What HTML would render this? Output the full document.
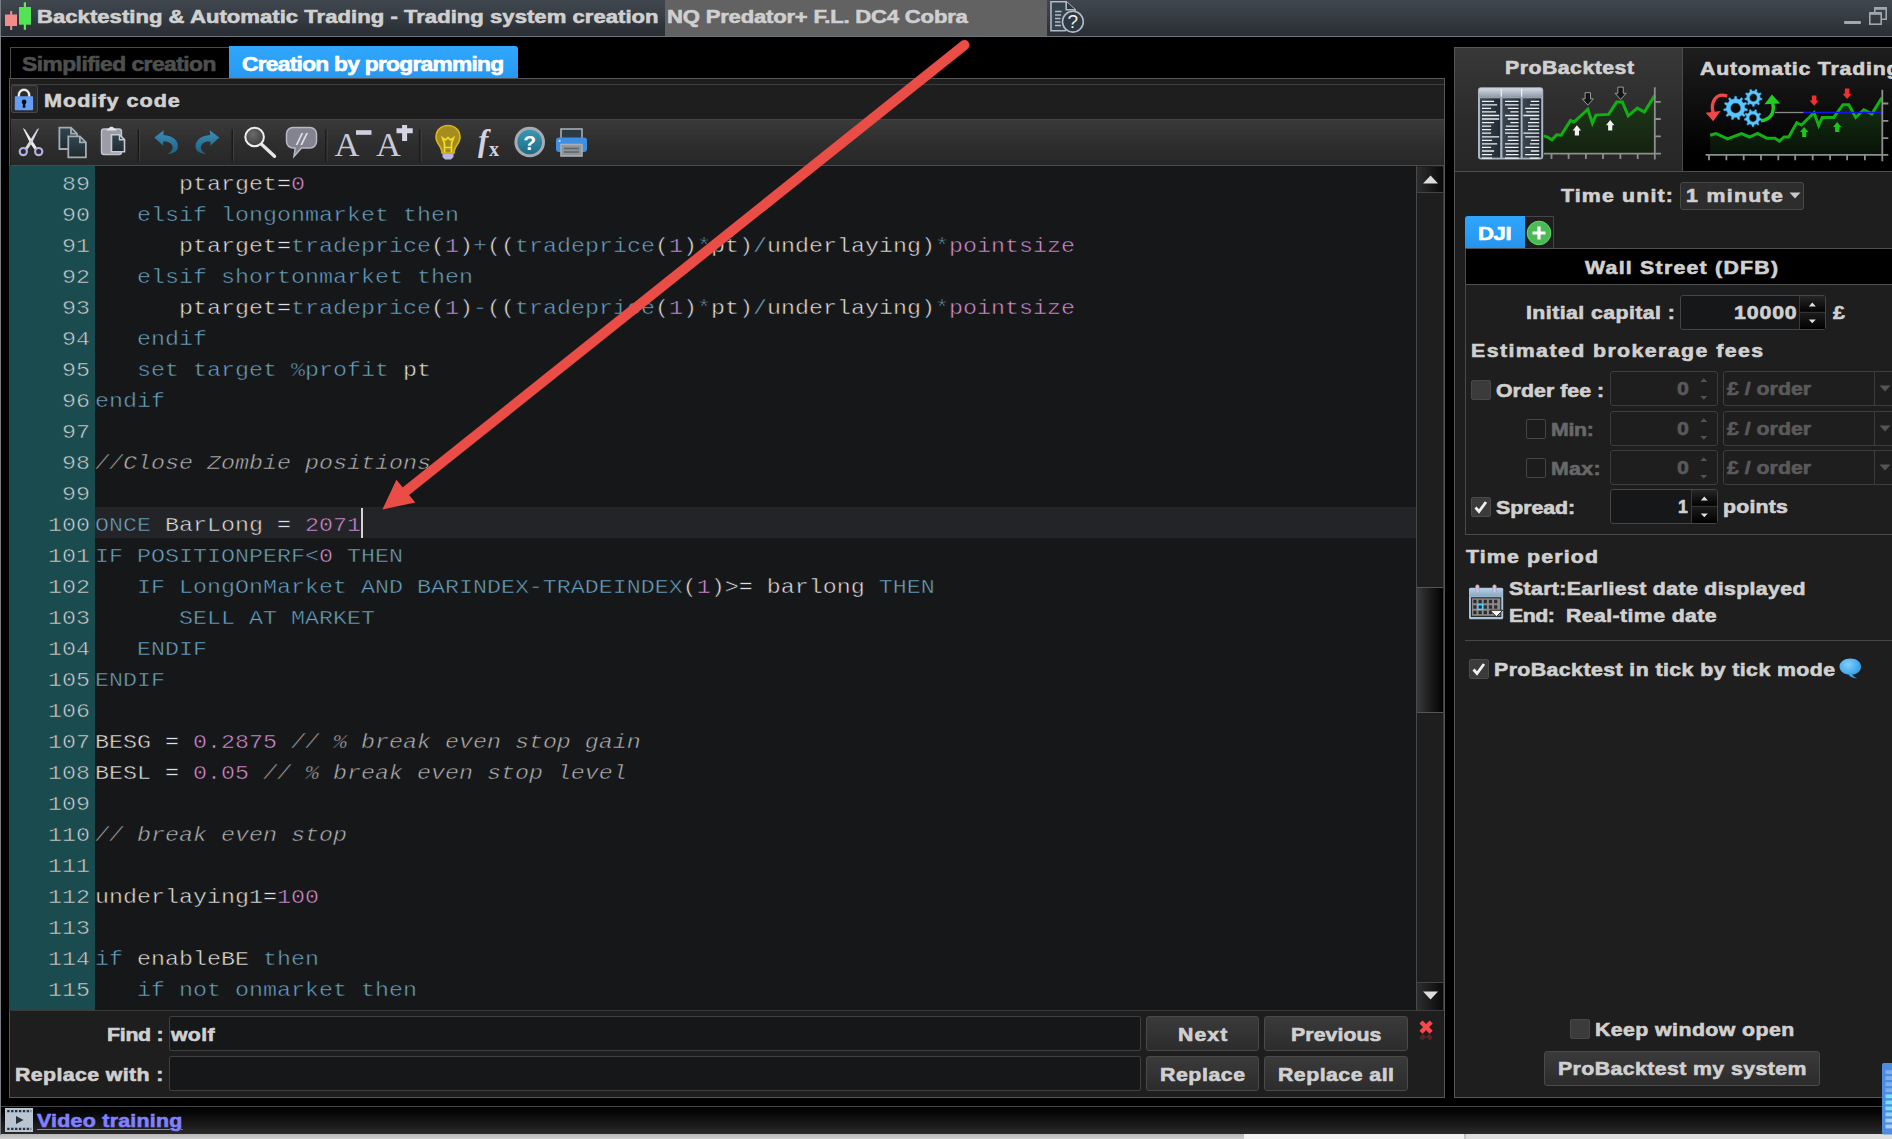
<!DOCTYPE html>
<html lang="en">
<head>
<meta charset="utf-8">
<title>Backtesting &amp; Automatic Trading - Trading system creation</title>
<style>
*{box-sizing:border-box;margin:0;padding:0}
html,body{width:1892px;height:1139px;overflow:hidden;background:#000}
body{position:relative;font-family:"Liberation Sans",sans-serif;font-weight:bold;color:#d6d6d6;font-size:20px}
.abs{position:absolute}
.t{position:absolute;white-space:pre;line-height:24px;height:24px;transform-origin:0 0;-webkit-text-stroke:0.6px currentColor}
/* title bar */
#titlebar{left:0;top:0;width:1892px;height:37px;background:linear-gradient(#41474f,#383e45 40%,#2d3238 80%,#2a2f35);border-bottom:1px solid #6d747c}
#titlehl{left:665px;top:0;width:382px;height:36px;background:#626262}
/* tabs */
#tab1{left:10px;top:47px;width:220px;height:32px;border:1px solid #4a4a4a;border-right:none;background:#000}
#tab2{left:229px;top:46px;width:289px;height:33px;background:linear-gradient(#30a6fc,#2b9ff8 60%,#2796ee);border-radius:0 3px 0 0}
/* left panel */
#lpanel{left:9px;top:78px;width:1436px;height:1020px;border:1px solid #565656;background:#1e1e1e}
#toolbar{left:11px;top:119px;width:1433px;height:47px;background:linear-gradient(#3a3a3a,#2e2e2e 50%,#272727);border-top:1px solid #444;border-bottom:1px solid #4a4a4a}
#codebg{left:11px;top:166px;width:1405px;height:844px;background:#161719}
#gutter{left:9px;top:166px;width:86px;height:844px;background:#1a4b4f}
.row{position:absolute;left:10px;width:1406px;height:31px;font-family:"Liberation Mono",monospace;font-weight:normal;font-size:20.4px;white-space:pre}
.row.hl .cd{background:#232427;-webkit-text-stroke-color:#232427}
.ln{position:absolute;left:0;top:0;width:70px;height:31px;line-height:37.500px;text-align:right;color:#d0d0d0;-webkit-text-stroke:0.5px #1a4b4f;transform:scaleX(1.1438);transform-origin:100% 0;left:10px}
.cd{position:absolute;left:85px;top:0;width:1155px;height:31px;line-height:37.500px;-webkit-text-stroke:0.5px #161719;transform:scaleX(1.1438);transform-origin:0 0}
.k{color:#68a4c6}.n{color:#d68ed6}.i{color:#e2e2e2}.c{color:#b2b2b2;font-style:italic}
/* find */
.inp{position:absolute;background:#161719;border:1px solid #3f3f3f;border-radius:2px}
.btn{position:absolute;background:linear-gradient(#3a3a3a,#2c2c2c);border:1px solid #4a4a4a;border-radius:3px;text-align:center;line-height:32px;color:#d4d4d4}
/* right panel */
#rpanel{left:1454px;top:47px;width:451px;height:1051px;border:1px solid #565656;background:#1e1e1e}

.fin{position:absolute;left:1610px;width:108px;height:35px;border:1px solid #3d3d3d;border-radius:3px;background:#1e1e1e}
.fdd{position:absolute;left:1723px;width:180px;height:35px;border:1px solid #3d3d3d;border-radius:3px;background:#1e1e1e}
.fdd:after{content:"";position:absolute;left:150px;top:0;width:1px;height:33px;background:#3d3d3d}
</style>
</head>
<body>
<!-- title bar -->
<div id="titlebar" class="abs"></div>
<div id="titlehl" class="abs"></div>

<!-- tabs -->
<div id="tab1" class="abs"></div>
<div id="tab2" class="abs"></div>

<!-- left panel -->
<div id="lpanel" class="abs"></div>
<div class="abs" style="left:11px;top:84px;width:1433px;height:1px;background:#3c3c3c"></div>
<div id="toolbar" class="abs"></div>
<div id="codebg" class="abs"></div>
<div id="gutter" class="abs"></div>
<div class="row" style="top:166px"><span class="ln">89</span><span class="cd"><span class="i">      ptarget=</span><span class="n">0</span></span></div>
<div class="row" style="top:197px"><span class="ln">90</span><span class="cd"><span class="k">   elsif longonmarket then</span></span></div>
<div class="row" style="top:228px"><span class="ln">91</span><span class="cd"><span class="i">      ptarget=</span><span class="k">tradeprice</span><span class="i">(</span><span class="n">1</span><span class="i">)</span><span class="k">+</span><span class="i">((</span><span class="k">tradeprice</span><span class="i">(</span><span class="n">1</span><span class="i">)</span><span class="k">*</span><span class="i">pt)</span><span class="k">/</span><span class="i">underlaying)</span><span class="k">*</span><span class="n">pointsize</span></span></div>
<div class="row" style="top:259px"><span class="ln">92</span><span class="cd"><span class="k">   elsif shortonmarket then</span></span></div>
<div class="row" style="top:290px"><span class="ln">93</span><span class="cd"><span class="i">      ptarget=</span><span class="k">tradeprice</span><span class="i">(</span><span class="n">1</span><span class="i">)</span><span class="k">-</span><span class="i">((</span><span class="k">tradeprice</span><span class="i">(</span><span class="n">1</span><span class="i">)</span><span class="k">*</span><span class="i">pt)</span><span class="k">/</span><span class="i">underlaying)</span><span class="k">*</span><span class="n">pointsize</span></span></div>
<div class="row" style="top:321px"><span class="ln">94</span><span class="cd"><span class="k">   endif</span></span></div>
<div class="row" style="top:352px"><span class="ln">95</span><span class="cd"><span class="k">   set target %profit</span><span class="i"> pt</span></span></div>
<div class="row" style="top:383px"><span class="ln">96</span><span class="cd"><span class="k">endif</span></span></div>
<div class="row" style="top:414px"><span class="ln">97</span><span class="cd"></span></div>
<div class="row" style="top:445px"><span class="ln">98</span><span class="cd"><span class="c">//Close Zombie positions</span></span></div>
<div class="row" style="top:476px"><span class="ln">99</span><span class="cd"></span></div>
<div class="row hl" style="top:507px"><span class="ln">100</span><span class="cd"><span class="k">ONCE</span><span class="i"> BarLong = </span><span class="n">2071</span></span></div>
<div class="row" style="top:538px"><span class="ln">101</span><span class="cd"><span class="k">IF POSITIONPERF&lt;</span><span class="n">0</span><span class="k"> THEN</span></span></div>
<div class="row" style="top:569px"><span class="ln">102</span><span class="cd"><span class="k">   IF LongOnMarket AND BARINDEX-TRADEINDEX</span><span class="i">(</span><span class="n">1</span><span class="i">)&gt;= barlong </span><span class="k">THEN</span></span></div>
<div class="row" style="top:600px"><span class="ln">103</span><span class="cd"><span class="k">      SELL AT MARKET</span></span></div>
<div class="row" style="top:631px"><span class="ln">104</span><span class="cd"><span class="k">   ENDIF</span></span></div>
<div class="row" style="top:662px"><span class="ln">105</span><span class="cd"><span class="k">ENDIF</span></span></div>
<div class="row" style="top:693px"><span class="ln">106</span><span class="cd"></span></div>
<div class="row" style="top:724px"><span class="ln">107</span><span class="cd"><span class="i">BESG = </span><span class="n">0.2875</span><span class="c"> // % break even stop gain</span></span></div>
<div class="row" style="top:755px"><span class="ln">108</span><span class="cd"><span class="i">BESL = </span><span class="n">0.05</span><span class="c"> // % break even stop level</span></span></div>
<div class="row" style="top:786px"><span class="ln">109</span><span class="cd"></span></div>
<div class="row" style="top:817px"><span class="ln">110</span><span class="cd"><span class="c">// break even stop</span></span></div>
<div class="row" style="top:848px"><span class="ln">111</span><span class="cd"></span></div>
<div class="row" style="top:879px"><span class="ln">112</span><span class="cd"><span class="i">underlaying1=</span><span class="n">100</span></span></div>
<div class="row" style="top:910px"><span class="ln">113</span><span class="cd"></span></div>
<div class="row" style="top:941px"><span class="ln">114</span><span class="cd"><span class="k">if</span><span class="i"> enableBE </span><span class="k">then</span></span></div>
<div class="row" style="top:972px"><span class="ln">115</span><span class="cd"><span class="k">   if not onmarket then</span></span></div>
<div class="abs" style="left:11px;top:1010px;width:1433px;height:1px;background:#3c3c3c"></div>

<!-- find / replace -->
<div class="inp" style="left:169px;top:1016px;width:972px;height:35px"></div>
<div class="inp" style="left:169px;top:1056px;width:972px;height:35px"></div>
<div class="btn" style="left:1146px;top:1016px;width:113px;height:35px"></div>
<div class="btn" style="left:1264px;top:1016px;width:144px;height:35px"></div>
<div class="btn" style="left:1146px;top:1056px;width:113px;height:35px"></div>
<div class="btn" style="left:1264px;top:1056px;width:144px;height:35px"></div>

<!-- bottom bar -->
<div class="abs" style="left:0;top:1098px;width:1892px;height:8px;background:#000"></div>
<div class="abs" style="left:0;top:1106px;width:1892px;height:29px;background:linear-gradient(#000,#0a0a0a 30%,#2c2c2c);border-top:1px solid #474747"></div>
<div class="abs" style="left:0;top:1134px;width:1892px;height:5px;background:linear-gradient(#b8b8b8,#cfcfcf)"></div>
<div class="abs" style="left:1244px;top:1134px;width:220px;height:5px;background:#f2f2f2"></div>
<div class="abs" style="left:1466px;top:1134px;width:426px;height:5px;background:#dedede"></div>
<!-- right panel -->
<div id="rpanel" class="abs"></div>


<!-- right panel shapes -->
<div class="abs" style="left:1455px;top:48px;width:228px;height:124px;background:linear-gradient(#383838,#2b2b2b 60%,#262626);border-right:1px solid #4a4a4a"></div>
<div class="abs" style="left:1683px;top:48px;width:209px;height:124px;background:linear-gradient(#1e1e1e,#0d0d0d 50%,#000 85%)"></div>
<div class="abs" style="left:1455px;top:171px;width:437px;height:1px;background:#4e4e4e"></div>
<!-- time unit dropdown -->
<div class="abs" style="left:1680px;top:182px;width:124px;height:28px;background:#2d2d2d;border:1px solid #484848;border-radius:3px"></div>
<svg class="abs" style="left:1789px;top:192px" width="12" height="7"><path d="M0.5 0.5h11l-5.5 6z" fill="#c8c8c8"/></svg>
<!-- DJI tab -->
<div class="abs" style="left:1465px;top:216px;width:60px;height:33px;background:linear-gradient(#2fa5fc,#2a9cf6 60%,#2493ec);border-radius:3px 0 0 0"></div>
<div class="abs" style="left:1525px;top:216px;width:29px;height:33px;border:1px solid #454545;border-left:none;background:#1e1e1e"></div>
<svg class="abs" style="left:1526px;top:220px" width="26" height="26"><circle cx="13" cy="13" r="11.800" fill="#4cba54" stroke="#62dc6a" stroke-width="1"/><path d="M13 6.5v13M6.5 13h13" stroke="#fff" stroke-width="3.2"/></svg>
<!-- wall street bar -->
<div class="abs" style="left:1465px;top:248px;width:427px;height:37px;background:#000;border:1px solid #505050;border-right:none"></div>
<!-- group box -->
<div class="abs" style="left:1465px;top:284px;width:440px;height:251px;border:1px solid #4a4a4a;border-top:none"></div>
<!-- initial capital input -->
<div class="abs" style="left:1680px;top:295px;width:146px;height:35px;background:#161719;border:1px solid #454545;border-radius:3px"></div>
<div class="abs" style="left:1799px;top:296px;width:26px;height:33px;background:linear-gradient(#262626,#050505 45%,#1c1c1c 52%,#000);border-left:1px solid #3a3a3a"></div>
<div class="abs" style="left:1799px;top:312px;width:26px;height:1px;background:#333"></div>
<svg class="abs" style="left:1807.500px;top:301.500px" width="9" height="5"><path d="M0.800 4.400l3.500-3.800 3.500 3.800z" fill="#e0e0e0"/></svg>
<svg class="abs" style="left:1807.500px;top:319px" width="9" height="5"><path d="M0.800 0.500l3.500 3.800 3.500-3.800z" fill="#e0e0e0"/></svg>
<!-- order fee rows -->
<div class="abs" style="left:1471px;top:380px;width:20px;height:20px;background:#3b3b3b;border:1px solid #484848;border-radius:2px"></div>
<div class="abs" style="left:1526px;top:419px;width:20px;height:20px;background:#1c1c1c;border:1px solid #454545;border-radius:2px"></div>
<div class="abs" style="left:1526px;top:458px;width:20px;height:20px;background:#1c1c1c;border:1px solid #454545;border-radius:2px"></div>
<div class="fin" style="top:371px"></div><div class="fdd" style="top:371px"></div>
<div class="fin" style="top:411px"></div><div class="fdd" style="top:411px"></div>
<div class="fin" style="top:450px"></div><div class="fdd" style="top:450px"></div>
<svg class="abs" style="left:1700px;top:378px" width="8" height="22"><path d="M0.300 4l3.500-3.700 3.500 3.700zM0.300 18l3.500 3.700 3.500-3.700z" fill="#525252"/></svg>
<svg class="abs" style="left:1700px;top:418px" width="8" height="22"><path d="M0.300 4l3.500-3.700 3.500 3.700zM0.300 18l3.500 3.700 3.500-3.700z" fill="#525252"/></svg>
<svg class="abs" style="left:1700px;top:457px" width="8" height="22"><path d="M0.300 4l3.500-3.700 3.500 3.700zM0.300 18l3.500 3.700 3.500-3.700z" fill="#525252"/></svg>
<svg class="abs" style="left:1879px;top:385px" width="12" height="7"><path d="M0.5 0.5h11l-5.5 6z" fill="#555"/></svg>
<svg class="abs" style="left:1879px;top:425px" width="12" height="7"><path d="M0.5 0.5h11l-5.5 6z" fill="#555"/></svg>
<svg class="abs" style="left:1879px;top:464px" width="12" height="7"><path d="M0.5 0.5h11l-5.5 6z" fill="#555"/></svg>
<!-- spread -->
<div class="abs" style="left:1471px;top:497px;width:20px;height:20px;background:#3b3b3b;border:1px solid #4a4a4a;border-radius:2px"></div>
<svg class="abs" style="left:1473px;top:499px" width="16" height="16"><path d="M2.5 8.5l3.5 4 7-9.5" stroke="#f0f0f0" stroke-width="2.8" fill="none"/></svg>
<div class="abs" style="left:1610px;top:489px;width:108px;height:35px;background:#161719;border:1px solid #454545;border-radius:3px"></div>
<div class="abs" style="left:1691px;top:490px;width:26px;height:33px;background:linear-gradient(#262626,#050505 45%,#1c1c1c 52%,#000);border-left:1px solid #3a3a3a"></div>
<div class="abs" style="left:1691px;top:506px;width:26px;height:1px;background:#333"></div>
<svg class="abs" style="left:1699.500px;top:495.500px" width="9" height="5"><path d="M0.800 4.400l3.500-3.800 3.500 3.800z" fill="#e0e0e0"/></svg>
<svg class="abs" style="left:1699.500px;top:513px" width="9" height="5"><path d="M0.800 0.500l3.500 3.800 3.500-3.800z" fill="#e0e0e0"/></svg>
<!-- time period -->
<div class="abs" style="left:1465px;top:640px;width:427px;height:1px;background:#474747"></div>
<!-- tick checkbox -->
<div class="abs" style="left:1469px;top:659px;width:20px;height:20px;background:#3b3b3b;border:1px solid #4a4a4a;border-radius:2px"></div>
<svg class="abs" style="left:1471px;top:661px" width="16" height="16"><path d="M2.5 8.5l3.5 4 7-9.5" stroke="#f0f0f0" stroke-width="2.8" fill="none"/></svg>
<!-- keep window open -->
<div class="abs" style="left:1570px;top:1019px;width:20px;height:20px;background:#3b3b3b;border:1px solid #484848;border-radius:2px"></div>
<div class="btn" style="left:1544px;top:1051px;width:276px;height:35px"></div>

<!-- window frame -->
<div class="abs" style="left:0;top:0;width:1px;height:1135px;background:#777c82"></div>
<!-- title icon: candlesticks -->
<svg class="abs" style="left:0;top:0" width="36" height="36">
<rect x="10.2" y="11" width="2" height="19" fill="#f08a8a"/><rect x="5" y="14.5" width="12" height="11.5" fill="#f38b8b"/>
<rect x="23.8" y="2.3" width="2.2" height="27.5" fill="#5ee85e"/><rect x="19" y="7" width="12" height="17.7" fill="#54e354"/>
</svg>
<!-- help doc icon -->
<svg class="abs" style="left:1048px;top:0" width="40" height="36" fill="none" stroke="#b2bac2" stroke-width="1.600">
<path d="M3 1.800h15.200l9 8v9.200l-10 11.700H3z" fill="#35434f"/><path d="M18.200 1.800v8h9" fill="#2b353e"/>
<path d="M7 11.500h6.500M7 15h6M7 18.500h5.500M7 22h5.500M7 25.500h6" stroke-width="1.500"/>
<circle cx="24.900" cy="21.700" r="10.400" fill="#2e3942"/>
<text x="24.900" y="28.300" font-family="Liberation Sans,sans-serif" font-size="19" font-weight="normal" text-anchor="middle" fill="#f0f2f4" stroke="none">?</text>
</svg>
<!-- window controls -->
<div class="abs" style="left:1844px;top:21px;width:17px;height:3px;background:#a0a7af;border-radius:1px"></div>
<svg class="abs" style="left:1866px;top:5px" width="24" height="22" fill="none" stroke="#a0a7af" stroke-width="1.600"><path d="M8.800 7V2.800h11.400v11.400h-4.500"/><path d="M8.800 3.600h11.400" stroke-width="2.400"/><rect x="3.800" y="7.800" width="11.400" height="11.400"/><path d="M3.800 8.600h11.400" stroke-width="2.400"/></svg>
<!-- lock icon -->
<div class="abs" style="left:11px;top:85px;width:27px;height:28px;background:#2b2b2b;border:1px solid #474747;border-radius:2px"></div>
<svg class="abs" style="left:11px;top:85px" width="27" height="28">
<path d="M7.800 12.500V10a5.200 5.200 0 0 1 10.400 0V12.500" fill="none" stroke="#8a8a8a" stroke-width="3.400" opacity=".55"/>
<path d="M7.800 12.500V10a5.200 5.200 0 0 1 10.400 0V12.500" fill="none" stroke="#f4f4f4" stroke-width="1.900"/>
<rect x="3.800" y="11.200" width="18.300" height="14" rx=".8" fill="#659cf4"/>
<circle cx="13.100" cy="17" r="2.400" fill="#0a0d16"/><path d="M12.100 17.500h2l.4 5.300h-2.800z" fill="#0a0d16"/>
</svg>
<!-- toolbar icons -->
<svg class="abs" style="left:11px;top:120px" width="600" height="46">
<defs>
<linearGradient id="gdoc" x1="0" y1="0" x2="0" y2="1"><stop offset="0" stop-color="#33454f"/><stop offset="1" stop-color="#1f2a31"/></linearGradient>
<linearGradient id="gblue" x1="0" y1="0" x2="0" y2="1"><stop offset="0" stop-color="#3a90b8"/><stop offset="1" stop-color="#1f5f82"/></linearGradient>
<radialGradient id="gmag" cx="0.4" cy="0.35" r="0.7"><stop offset="0" stop-color="#6a6a6a"/><stop offset="1" stop-color="#3a3a3a"/></radialGradient>
<linearGradient id="ghelp" x1="0" y1="0" x2="0" y2="1"><stop offset="0" stop-color="#3a9ab4"/><stop offset="1" stop-color="#1c6a86"/></linearGradient>
</defs>
<!-- scissors (origin offset: x-11, y-120) -->
<g>
<path d="M11.800 8 L14 9.500 L26.500 28.800 L23.500 29.500 L19 23 z" fill="#ececf2"/>
<path d="M28.200 8 L26 9.500 L13.500 28.800 L16.500 29.500 L21 23 z" fill="#d6d6de"/>
<circle cx="12.3" cy="31.6" r="3.6" fill="none" stroke="#b4b0e2" stroke-width="2.2"/>
<circle cx="27.7" cy="31.6" r="3.6" fill="none" stroke="#b4b0e2" stroke-width="2.2"/>
</g>
<!-- copy -->
<g stroke="#a4adb4" stroke-width="1.8" fill="url(#gdoc)">
<path d="M48.4 7.6h11.6l6 6v15.4h-17.6z"/><path d="M60 7.6v6h6" fill="none"/>
<path d="M57.3 16.4h11.6l6 6v15h-17.6z"/><path d="M68.9 16.4v6h6" fill="none"/>
</g>
<!-- paste -->
<g>
<rect x="90.5" y="9" width="20" height="25.5" rx="2.5" fill="#9c9ca6" stroke="#c4c4cc" stroke-width="1.4"/>
<path d="M95.5 10.5c0-2 2-2 2.5-2 .3-2.2 4.700-2.2 5 0 .5 0 2.500 0 2.500 2z" fill="#e4e4ea"/>
<path d="M100.500 14.700h8l5 5v12h-13z" fill="url(#gdoc)" stroke="#c8ccd2" stroke-width="1.6"/><path d="M108.500 14.700v5h5" fill="none" stroke="#c8ccd2" stroke-width="1.4"/>
</g>
<path d="M127.500 9.500v32" stroke="#161616" stroke-width="1.4"/><path d="M128.600 9.500v32" stroke="#484848" stroke-width="0.8"/>
<!-- undo -->
<path d="M143.300 17.500 L152.800 10.300 L152.300 15 C162 15.500 168 21 166.800 28 C166 31.500 161.500 34 156.500 34 C161.500 31.500 163.200 27 160 23.800 C158 21.800 155.500 21.300 152 21.500 L152.300 25.800z" fill="url(#gblue)"/>
<!-- redo -->
<path d="M208.200 17.500 L198.700 10.300 L199.200 15 C189.500 15.500 183.500 21 184.700 28 C185.500 31.500 190 34 195 34 C190 31.500 188.300 27 191.500 23.800 C193.500 21.800 196 21.300 199.500 21.500 L199.200 25.800z" fill="url(#gblue)"/>
<path d="M221.300 9.500v32" stroke="#161616" stroke-width="1.4"/><path d="M222.400 9.500v32" stroke="#484848" stroke-width="0.8"/>
<!-- magnifier -->
<path d="M250 23.800 L263.500 36.300" stroke="#e6e6e6" stroke-width="3.4" stroke-linecap="round"/>
<circle cx="243.600" cy="17" r="9.300" fill="url(#gmag)" stroke="#f0f0f0" stroke-width="2"/>
<!-- comment bubble -->
<path d="M282 7.500h17a6.500 6.500 0 0 1 6.500 6.500v7.500a6.500 6.500 0 0 1 -6.500 6.500h-8.500l-7.500 8.500 1.200-8.500h-2.200a6.500 6.500 0 0 1 -6.500 -6.500v-7.500a6.500 6.500 0 0 1 6.500 -6.500z" fill="#83838f" stroke="#b8b8c6" stroke-width="1.5"/>
<text x="290.500" y="24.500" font-family="Liberation Sans,sans-serif" font-style="italic" font-weight="normal" font-size="17" text-anchor="middle" fill="#f4f4f8">//</text>
<path d="M315 9.500v32" stroke="#161616" stroke-width="1.4"/><path d="M316.100 9.500v32" stroke="#484848" stroke-width="0.8"/>
<!-- A- A+ -->
<text x="323.500" y="36" font-family="Liberation Serif,serif" font-weight="normal" font-size="34.5" fill="#c9c9d8">A</text>
<rect x="345" y="10.200" width="15.500" height="4.600" fill="#d0d0e0"/>
<text x="365" y="36" font-family="Liberation Serif,serif" font-weight="normal" font-size="34.5" fill="#c9c9d8">A</text>
<path d="M385.500 10.700h16.200M393.600 5v16" stroke="#d4d4e4" stroke-width="5"/>
<path d="M409 9.500v32" stroke="#161616" stroke-width="1.4"/><path d="M410.100 9.500v32" stroke="#484848" stroke-width="0.8"/>
<!-- bulb -->
<path d="M437 5.500c-7 0-12 5-12 11.500 0 4.500 2.500 7 4.500 10.500 1 1.800 1.500 3.500 1.500 5.500h12c0-2 .5-3.700 1.500-5.500 2-3.500 4.500-6 4.500-10.500 0-6.500-5-11.500-12-11.500z" fill="#a48c1e" stroke="#d8b61c" stroke-width="1.600"/>
<path d="M433.500 32.500v-9l-2-5.500 3 2 2.500-2.500 2.500 2.500 3-2-2 5.500v9" fill="none" stroke="#f4dc2a" stroke-width="1.700"/>
<path d="M433.800 27.500h6.400" stroke="#f4dc2a" stroke-width="1.500"/>
<path d="M431.500 33.500h11v3.500l-2.500 2.500h-6l-2.500-2.500z" fill="#b9b5e0"/>
<!-- fx -->
<text x="467" y="30.500" font-family="Liberation Serif,serif" font-style="italic" font-weight="bold" font-size="31" fill="#d2d2e0">f</text>
<text x="478" y="35.500" font-family="Liberation Serif,serif" font-weight="bold" font-size="20" fill="#d2d2e0">x</text>
<!-- help -->
<circle cx="518.700" cy="22" r="13.800" fill="url(#ghelp)" stroke="#a9a9b3" stroke-width="3"/>
<text x="518.700" y="29.500" font-family="Liberation Sans,sans-serif" font-weight="bold" font-size="21" text-anchor="middle" fill="#fff">?</text>
<!-- printer -->
<rect x="550" y="9" width="21" height="11" fill="#2c3b45" stroke="#a8aeb4" stroke-width="1.600"/>
<rect x="545" y="17.500" width="31" height="14.500" rx="3" fill="#3d8fe4"/>
<circle cx="548.600" cy="21" r="1.100" fill="#cfe4ff"/>
<rect x="550" y="24.500" width="21" height="11.500" fill="#8e9499" stroke="#a8aeb4" stroke-width="1.600"/>
<path d="M553 28.500h15M553 32h15" stroke="#5e6468" stroke-width="1.500"/>
</svg>

<!-- scrollbar -->
<div class="abs" style="left:1416px;top:166px;width:28px;height:844px;background:#1e1e1e;border-left:1px solid #4a4a4a;border-right:1px solid #3c3c3c"></div>
<div class="abs" style="left:1417px;top:167px;width:26px;height:26px;background:linear-gradient(90deg,#2e2e2e,#0a0a0a);border-bottom:1px solid #444"></div>
<svg class="abs" style="left:1423px;top:175px" width="15" height="9"><path d="M0 8.500l7.500-8 7.500 8z" fill="#dcdcdc"/></svg>
<div class="abs" style="left:1417px;top:587px;width:26px;height:126px;background:linear-gradient(90deg,#3a3a3a,#1c1c1c 50%,#020202);border-top:1px solid #555;border-bottom:1px solid #555"></div>
<div class="abs" style="left:1417px;top:982px;width:26px;height:28px;background:linear-gradient(90deg,#2e2e2e,#0a0a0a);border-top:1px solid #444"></div>
<svg class="abs" style="left:1423px;top:991px" width="15" height="9"><path d="M0 0.500l7.500 8 7.500-8z" fill="#dcdcdc"/></svg>
<!-- red close x -->
<svg class="abs" style="left:1418px;top:1019px" width="17" height="22"><path d="M3 3l10.200 10.200M13.200 3l-10.200 10.200" stroke="#f8464a" stroke-width="4.400"/><path d="M3 20l3.600-3.600M13.200 20l-3.600-3.600" stroke="#e83a40" stroke-width="4.400" opacity=".28"/></svg>
<!-- big red arrow -->
<svg class="abs" style="left:0;top:0;pointer-events:none" width="1000" height="560"><path d="M964.500 45 L406.300 490.900" stroke="#ea4d45" stroke-width="10" stroke-linecap="round"/><path d="M382.400 509.600 L396.400 479.700 L415.300 502.500z" fill="#ea4d45"/></svg>
<!-- caret -->
<div class="abs" style="left:361px;top:508px;width:2px;height:30px;background:#d4d4d4"></div>
<!-- video icon -->
<svg class="abs" style="left:5px;top:1108px" width="28" height="24"><rect x="0" y="0" width="28" height="24" fill="#b9c5d1"/><path d="M11 8l7.500 4-7.500 4z" fill="#22303a"/><path d="M2.200 3.200h24M2.200 20.800h24" stroke="#25343e" stroke-width="2.200" stroke-dasharray="2.400 1.500"/></svg>
<!-- calendar icon -->
<svg class="abs" style="left:1467px;top:584px" width="38" height="37">
<defs><linearGradient id="gcal" x1="0" y1="0" x2="0" y2="1"><stop offset="0" stop-color="#b4d2ea"/><stop offset="1" stop-color="#86a6c2"/></linearGradient></defs>
<rect x="2" y="3.800" width="34.200" height="31.400" rx="1.500" fill="#a9c4da"/>
<rect x="2.600" y="4.400" width="33" height="8.200" fill="url(#gcal)"/>
<rect x="8.700" y="0.700" width="3.400" height="8.600" rx="1.600" fill="#d2c3dc" stroke="#9f94b4" stroke-width=".6"/><rect x="25.800" y="0.700" width="3.400" height="8.600" rx="1.600" fill="#d2c3dc" stroke="#9f94b4" stroke-width=".6"/>
<rect x="3.900" y="13.200" width="30.400" height="19.800" fill="#2c2c2c"/>
<rect x="5" y="14.400" width="28.200" height="17.400" fill="#8a8a8a"/>
<rect x="6.3" y="15.8" width="3.200" height="3.400" fill="#2b2b2d"/><rect x="11.5" y="15.8" width="3.200" height="3.400" fill="#2b2b2d"/><rect x="16.7" y="15.8" width="3.200" height="3.400" fill="#2b2b2d"/><rect x="21.9" y="15.8" width="3.200" height="3.400" fill="#2b2b2d"/><rect x="27.1" y="15.8" width="3.200" height="3.400" fill="#2b2b2d"/><rect x="6.3" y="21.3" width="3.200" height="3.400" fill="#2b2b2d"/><rect x="11.5" y="21.3" width="3.200" height="3.400" fill="#2b2b2d"/><rect x="16.7" y="21.3" width="3.200" height="3.400" fill="#2b2b2d"/><rect x="21.9" y="21.3" width="3.200" height="3.400" fill="#2b2b2d"/><rect x="27.1" y="21.3" width="3.200" height="3.400" fill="#2b2b2d"/><rect x="6.3" y="26.8" width="3.200" height="3.400" fill="#2b2b2d"/><rect x="11.5" y="26.8" width="3.200" height="3.400" fill="#2b2b2d"/><rect x="16.7" y="26.8" width="3.200" height="3.400" fill="#2b2b2d"/><rect x="21.9" y="26.8" width="3.200" height="3.400" fill="#2b2b2d"/><rect x="27.1" y="26.8" width="3.200" height="3.400" fill="#2b2b2d"/>
<rect x="10.900" y="20.700" width="4.600" height="4.600" fill="#2b2b2d" stroke="#5cd0ff" stroke-width="1.400"/>
<path d="M23 26.300h12.800l-6.400 6.400z" fill="#f4f4f4" stroke="#2a2a2a" stroke-width="1"/>
</svg>
<!-- chat bubble -->
<svg class="abs" style="left:1838px;top:657px" width="26" height="24"><defs><radialGradient id="gbub" cx="0.4" cy="0.3" r="0.8"><stop offset="0" stop-color="#7fd0ff"/><stop offset="1" stop-color="#1f8fe0"/></radialGradient></defs><path d="M12.500 1.500c6 0 10.500 3.300 10.500 8s-3.500 7.500-8.500 8c1 2 2.500 3 4.500 3.700-3.500.3-6.500-.8-8.500-3.700-5-.5-9-3.500-9-8s5-8 11-8z" fill="url(#gbub)"/></svg>
<!-- bottom right blue widget -->
<svg class="abs" style="left:1881px;top:1062px" width="11" height="73"><rect x="1" y="1" width="12" height="71.500" rx="2" fill="#4c8de0"/><rect x="4.500" y="8.2" width="8" height="3.800" fill="#7eaef0"/><rect x="4.500" y="14.2" width="8" height="3.800" fill="#7eaef0"/><rect x="4.500" y="20.3" width="8" height="3.800" fill="#7eaef0"/><rect x="4.500" y="26.3" width="8" height="3.800" fill="#7eaef0"/><rect x="4.500" y="32.4" width="8" height="3.800" fill="#78def6"/><rect x="4.500" y="38.5" width="8" height="3.800" fill="#78def6"/><rect x="4.500" y="44.5" width="8" height="3.800" fill="#78def6"/><rect x="4.500" y="50.5" width="8" height="3.800" fill="#8fd0f6"/><rect x="4.500" y="56.6" width="8" height="3.800" fill="#a6d2f8"/><rect x="4.500" y="62.6" width="8" height="3.800" fill="#a8c8f6"/></svg>
<svg class="abs" style="left:0;top:0" width="1892" height="175" viewBox="0 0 1892 175">
<defs><linearGradient id="ghead" x1="0" y1="0" x2="0" y2="1"><stop offset="0" stop-color="#d4dae2"/><stop offset="1" stop-color="#8b96a4"/></linearGradient><linearGradient id="gcol" x1="0" y1="0" x2="1" y2="0"><stop offset="0" stop-color="#3a4652"/><stop offset="1" stop-color="#222a33"/></linearGradient><linearGradient id="garea" x1="0" y1="0" x2="0" y2="1"><stop offset="0" stop-color="#1f3a1c"/><stop offset="1" stop-color="#14220f"/></linearGradient><linearGradient id="garea2" x1="0" y1="0" x2="0" y2="1"><stop offset="0" stop-color="#163416"/><stop offset="1" stop-color="#081207"/></linearGradient></defs>
<rect x="1478.0" y="87.3" width="65.2" height="72.3" rx="3" fill="#a9b4c0"/>
<rect x="1479.0" y="88.3" width="63.2" height="9.5" rx="2" fill="url(#ghead)"/>
<rect x="1480.0" y="98.3" width="20.2" height="59.3" fill="url(#gcol)"/>
<path d="M1482.0 101.3h12.1M1482.0 104.8h15.2M1482.0 108.4h9.1M1482.0 111.9h14.1M1482.0 115.5h17.2M1482.0 119.0h17.2M1482.0 122.6h12.1M1482.0 126.1h9.1M1482.0 129.7h9.1M1482.0 133.2h9.1M1482.0 136.8h17.2M1482.0 140.3h10.1M1482.0 143.9h15.2M1482.0 147.4h9.1M1482.0 151.0h12.1M1482.0 154.6h10.1M1482.0 158.1h10.1" stroke="#eef0f2" stroke-width="1.3"/>
<rect x="1502.4" y="98.3" width="18.2" height="59.3" fill="url(#gcol)"/>
<path d="M1505.0 101.3h13.6M1505.0 104.8h13.6M1507.7 108.4h10.9M1510.4 111.9h8.2M1505.0 115.5h13.6M1507.7 119.0h10.9M1510.4 122.6h8.2M1505.9 126.1h12.7M1505.0 129.7h13.6M1505.0 133.2h13.6M1507.7 136.8h10.9M1507.7 140.3h10.9M1505.0 143.9h13.6M1505.0 147.4h13.6M1505.9 151.0h12.7M1505.9 154.6h12.7M1505.0 158.1h13.6" stroke="#eef0f2" stroke-width="1.3"/>
<rect x="1522.6" y="98.3" width="18.6" height="59.3" fill="url(#gcol)"/>
<path d="M1530.8 101.3h8.4M1529.9 104.8h9.3M1525.2 108.4h14.0M1526.2 111.9h13.0M1523.4 115.5h15.8M1529.9 119.0h9.3M1528.0 122.6h11.2M1528.0 126.1h11.2M1528.0 129.7h11.2M1523.4 133.2h15.8M1525.2 136.8h14.0M1530.8 140.3h8.4M1529.9 143.9h9.3M1525.2 147.4h14.0M1530.8 151.0h8.4M1525.2 154.6h14.0M1529.9 158.1h9.3" stroke="#eef0f2" stroke-width="1.3"/>
<path d="M1501.300 88.8v8M1521.600 88.8v8" stroke="#eef2f6" stroke-width="1.200"/>
<polygon points="1543.9,135.8 1547.4,137.0 1552.0,139.8 1556.6,134.7 1561.2,135.2 1570.5,120.4 1573.9,122.0 1587.8,109.3 1592.4,123.1 1595.9,115.1 1608.6,114.4 1616.7,101.9 1622.4,101.9 1628.2,115.8 1637.4,108.1 1644.4,112.1 1654.8,95.4 1654.8,153.6 1543.9,153.6" fill="url(#garea)"/>
<polyline points="1543.9,135.8 1547.4,137.0 1552.0,139.8 1556.6,134.7 1561.2,135.2 1570.5,120.4 1573.9,122.0 1587.8,109.3 1592.4,123.1 1595.9,115.1 1608.6,114.4 1616.7,101.9 1622.4,101.9 1628.2,115.8 1637.4,108.1 1644.4,112.1 1654.8,95.4" fill="none" stroke="#12b012" stroke-width="3" stroke-linejoin="miter"/>
<path d="M1654.8 87.3V159.6M1543.9 153.6H1661.0M1654.8 101.9h6M1654.8 119.0h6M1654.8 136.3h6M1551.5 153.6v5.5M1568.6 153.6v5.5M1585.9 153.6v5.5M1603.0 153.6v5.5M1620.4 153.6v5.5M1637.7 153.6v5.5" stroke="#8e8e8e" stroke-width="1.800" fill="none"/>
<path d="M1585.0 92.7 h5.5 v6.2 h2.8 l-5.5 6.2 l-5.5 -6.2 h2.8 z" fill="#141414" stroke="#9a9a9a" stroke-width="1"/>
<path d="M1617.8 87.1 h5.5 v6.2 h2.8 l-5.5 6.2 l-5.5 -6.2 h2.8 z" fill="#141414" stroke="#9a9a9a" stroke-width="1"/>
<path d="M1574.8 135.6 h4.2 v-5.2 h2.1 l-4.2 -5.2 l-4.2 5.2 h2.1 z" fill="#f0f0f0"/>
<path d="M1608.1 130.5 h4.2 v-5.2 h2.1 l-4.2 -5.2 l-4.2 5.2 h2.1 z" fill="#f0f0f0"/>
<polygon points="1710.2,135.2 1716.0,133.5 1727.5,138.8 1741.4,133.5 1749.5,137.0 1757.5,133.5 1766.8,138.2 1774.9,138.2 1779.5,141.2 1784.1,137.0 1788.7,137.0 1796.8,122.7 1801.4,125.0 1814.1,112.7 1818.7,125.5 1822.2,117.4 1833.8,117.4 1843.0,104.7 1848.8,104.7 1855.7,117.4 1863.8,109.7 1871.9,113.9 1881.8,97.7 1881.8,154.8 1710.2,154.8" fill="url(#garea2)"/>
<path d="M1774.9 112.5H1803.7" stroke="#8a8a8a" stroke-width="1.300"/>
<polyline points="1710.2,135.2 1716.0,133.5 1727.5,138.8 1741.4,133.5 1749.5,137.0 1757.5,133.5 1766.8,138.2 1774.9,138.2 1779.5,141.2 1784.1,137.0 1788.7,137.0 1796.8,122.7 1801.4,125.0 1814.1,112.7 1818.7,125.5 1822.2,117.4 1833.8,117.4 1843.0,104.7 1848.8,104.7 1855.7,117.4 1863.8,109.7 1871.9,113.9 1881.8,97.7" fill="none" stroke="#12b012" stroke-width="3"/>
<path d="M1803.7 112.5H1881.1" stroke="#1414ee" stroke-width="1.500"/>
<path d="M1882.3 89.7V161.2M1705.6 154.8H1888.3M1882.3 103.5h6M1882.3 120.8h6M1882.3 138.2h6M1709.0 154.8v5.5M1726.4 154.8v5.5M1743.7 154.8v5.5M1761.0 154.8v5.5M1778.3 154.8v5.5M1795.2 154.8v5.5M1812.7 154.8v5.5M1830.1 154.8v5.5M1847.1 154.8v5.5M1864.9 154.8v5.5" stroke="#8e8e8e" stroke-width="1.800" fill="none"/>
<path d="M1811.9 95.4 h4.5 v5.2 h2.2 l-4.5 5.2 l-4.5 -5.2 h2.2 z" fill="#f03030"/>
<path d="M1844.9 88.5 h4.5 v5.2 h2.2 l-4.5 5.2 l-4.5 -5.2 h2.2 z" fill="#f03030"/>
<path d="M1802.1 137.0 h4.2 v-5.0 h2.1 l-4.2 -5.0 l-4.2 5.0 h2.1 z" fill="#18c818"/>
<path d="M1835.1 131.9 h4.2 v-5.0 h2.1 l-4.2 -5.0 l-4.2 5.0 h2.1 z" fill="#18c818"/>
<path d="M1744.96,108.13 L1747.57,108.95 L1747.32,110.71 L1744.58,110.77 L1743.47,113.19 L1745.23,115.29 L1744.06,116.64 L1741.73,115.20 L1739.49,116.64 L1739.83,119.36 L1738.12,119.86 L1736.93,117.39 L1734.27,117.39 L1733.08,119.86 L1731.37,119.36 L1731.71,116.64 L1729.47,115.20 L1727.14,116.64 L1725.97,115.29 L1727.73,113.19 L1726.62,110.77 L1723.88,110.71 L1723.63,108.95 L1726.24,108.13 L1726.62,105.49 L1724.35,103.97 L1725.08,102.35 L1727.73,103.07 L1729.47,101.06 L1728.38,98.54 L1729.88,97.58 L1731.71,99.62 L1734.27,98.86 L1734.71,96.16 L1736.49,96.16 L1736.93,98.86 L1739.49,99.62 L1741.32,97.58 L1742.82,98.54 L1741.73,101.06 L1743.47,103.07 L1746.12,102.35 L1746.86,103.97 L1744.58,105.49z M1730.56,108.13 a5.04,5.04 0 1,0 10.08,0 a5.04,5.04 0 1,0 -10.08,0z" fill="#5cc6ff" fill-rule="evenodd" stroke="#2f8fd0" stroke-width=".5"/>
<path d="M1760.25,97.74 L1762.15,98.47 L1761.88,100.04 L1759.83,100.08 L1758.64,102.15 L1759.63,103.94 L1758.41,104.96 L1756.82,103.68 L1754.58,104.50 L1754.18,106.50 L1752.59,106.50 L1752.19,104.50 L1749.95,103.68 L1748.36,104.96 L1747.14,103.94 L1748.13,102.15 L1746.93,100.08 L1744.89,100.04 L1744.61,98.47 L1746.52,97.74 L1746.93,95.39 L1745.39,94.05 L1746.19,92.66 L1748.13,93.32 L1749.95,91.79 L1749.64,89.77 L1751.14,89.23 L1752.19,90.98 L1754.58,90.98 L1755.63,89.23 L1757.13,89.77 L1756.82,91.79 L1758.64,93.32 L1760.57,92.66 L1761.37,94.05 L1759.83,95.39z M1749.69,97.74 a3.70,3.70 0 1,0 7.39,0 a3.70,3.70 0 1,0 -7.39,0z" fill="#5cc6ff" fill-rule="evenodd" stroke="#2f8fd0" stroke-width=".5"/>
<path d="M1759.79,118.06 L1761.69,118.80 L1761.41,120.37 L1759.37,120.41 L1758.18,122.47 L1759.17,124.26 L1757.94,125.29 L1756.35,124.00 L1754.11,124.82 L1753.72,126.82 L1752.12,126.82 L1751.73,124.82 L1749.49,124.00 L1747.90,125.29 L1746.68,124.26 L1747.66,122.47 L1746.47,120.41 L1744.43,120.37 L1744.15,118.80 L1746.06,118.06 L1746.47,115.71 L1744.93,114.37 L1745.73,112.99 L1747.66,113.65 L1749.49,112.12 L1749.17,110.10 L1750.67,109.55 L1751.73,111.30 L1754.11,111.30 L1755.17,109.55 L1756.67,110.10 L1756.35,112.12 L1758.18,113.65 L1760.11,112.99 L1760.91,114.37 L1759.37,115.71z M1749.23,118.06 a3.70,3.70 0 1,0 7.39,0 a3.70,3.70 0 1,0 -7.39,0z" fill="#5cc6ff" fill-rule="evenodd" stroke="#2f8fd0" stroke-width=".5"/>
<path d="M1727.1 96.1 C1716.0 92.0 1710.2 102.4 1713.2 113.4" fill="none" stroke="#f04848" stroke-width="3.400"/>
<path d="M1705.6 112.7L1720.6 111.1L1713.2 121.3z" fill="#f04848"/>
<path d="M1761.0 120.8 C1771.4 119.7 1774.9 111.6 1772.6 102.8" fill="none" stroke="#22cc22" stroke-width="3.400"/>
<path d="M1764.5 104.2L1780.2 103.5L1771.9 94.5z" fill="#22cc22"/>
</svg>
<div class="t" style="left:36.5px;top:5.0px;color:#d0d0d0;letter-spacing:0.03px;transform:scaleX(1.150);font-size:19.2px">Backtesting &amp; Automatic Trading - Trading system creation</div>
<div class="t" style="left:666.5px;top:5.0px;color:#cfcfcf;letter-spacing:-0.17px;transform:scaleX(1.150);font-size:19.2px">NQ Predator+ F.L. DC4 Cobra</div>
<div class="t" style="left:22.3px;top:51.8px;color:#4f4f4f;letter-spacing:-0.44px;transform:scaleX(1.150);font-size:19.8px">Simplified creation</div>
<div class="t" style="left:242.0px;top:52.0px;color:#fff;letter-spacing:-0.63px;transform:scaleX(1.150);font-size:19.8px">Creation by programming</div>
<div class="t" style="left:44.3px;top:88.5px;color:#d0d0d0;letter-spacing:0.86px;transform:scaleX(1.150);font-size:18.8px">Modify code</div>
<div class="t" style="left:106.8px;top:1022.7px;color:#d0d0d0;letter-spacing:-0.23px;transform:scaleX(1.150);font-size:18.5px">Find :</div>
<div class="t" style="left:171.3px;top:1022.7px;color:#d0d0d0;letter-spacing:0.28px;transform:scaleX(1.150);font-size:18.5px">wolf</div>
<div class="t" style="left:15.0px;top:1063.1px;color:#d0d0d0;letter-spacing:0.36px;transform:scaleX(1.150);font-size:18.5px">Replace with :</div>
<div class="t" style="left:1178.2px;top:1022.8px;color:#d0d0d0;letter-spacing:0.92px;transform:scaleX(1.150);font-size:18.5px">Next</div>
<div class="t" style="left:1290.8px;top:1022.8px;color:#d0d0d0;letter-spacing:0.07px;transform:scaleX(1.150);font-size:18.5px">Previous</div>
<div class="t" style="left:1160.0px;top:1062.9px;color:#d0d0d0;letter-spacing:0.51px;transform:scaleX(1.150);font-size:18.5px">Replace</div>
<div class="t" style="left:1277.9px;top:1062.9px;color:#d0d0d0;letter-spacing:0.42px;transform:scaleX(1.150);font-size:18.5px">Replace all</div>
<div class="t" style="left:36.5px;top:1108.8px;color:#8181ff;letter-spacing:0.26px;transform:scaleX(1.150);font-size:18.5px;text-decoration:underline;text-decoration-thickness:1px;text-underline-offset:2px">Video training</div>
<div class="t" style="left:1504.5px;top:55.5px;color:#d0d0d0;letter-spacing:0.42px;transform:scaleX(1.150);font-size:18.5px">ProBacktest</div>
<div class="t" style="left:1700.0px;top:57.3px;color:#d0d0d0;letter-spacing:0.69px;transform:scaleX(1.150);font-size:18.5px">Automatic Trading</div>
<div class="t" style="left:1561.3px;top:184.3px;color:#d0d0d0;letter-spacing:1.02px;transform:scaleX(1.150);font-size:18.5px">Time unit:</div>
<div class="t" style="left:1685.5px;top:184.3px;color:#d0d0d0;letter-spacing:1.16px;transform:scaleX(1.150);font-size:18.5px">1 minute</div>
<div class="t" style="left:1478.2px;top:222.3px;color:#fff;letter-spacing:-0.33px;transform:scaleX(1.150);font-size:19.2px">DJI</div>
<div class="t" style="left:1584.5px;top:255.5px;color:#d0d0d0;letter-spacing:1.09px;transform:scaleX(1.150);font-size:18.5px">Wall Street (DFB)</div>
<div class="t" style="left:1526.0px;top:300.9px;color:#d0d0d0;letter-spacing:0.38px;transform:scaleX(1.150);font-size:18.5px">Initial capital :</div>
<div class="t" style="left:1733.8px;top:300.9px;color:#d0d0d0;letter-spacing:0.77px;transform:scaleX(1.150);font-size:18.5px">10000</div>
<div class="t" style="left:1832.5px;top:300.9px;color:#d0d0d0;letter-spacing:0.00px;transform:scaleX(1.157);font-size:18.5px">£</div>
<div class="t" style="left:1471.3px;top:339.1px;color:#d0d0d0;letter-spacing:1.25px;transform:scaleX(1.150);font-size:18.5px">Estimated brokerage fees</div>
<div class="t" style="left:1496.1px;top:379.0px;color:#d0d0d0;letter-spacing:0.05px;transform:scaleX(1.150);font-size:18.5px">Order fee :</div>
<div class="t" style="left:1677.2px;top:377.3px;color:#5a5a5a;letter-spacing:0.00px;transform:scaleX(1.157);font-size:18.5px">0</div>
<div class="t" style="left:1726.5px;top:377.3px;color:#5a5a5a;letter-spacing:0.01px;transform:scaleX(1.150);font-size:18.5px">£ / order</div>
<div class="t" style="left:1550.5px;top:417.8px;color:#686868;letter-spacing:-0.29px;transform:scaleX(1.150);font-size:18.5px">Min:</div>
<div class="t" style="left:1677.2px;top:416.8px;color:#5a5a5a;letter-spacing:0.00px;transform:scaleX(1.157);font-size:18.5px">0</div>
<div class="t" style="left:1726.5px;top:416.8px;color:#5a5a5a;letter-spacing:0.01px;transform:scaleX(1.150);font-size:18.5px">£ / order</div>
<div class="t" style="left:1550.5px;top:456.8px;color:#686868;letter-spacing:0.33px;transform:scaleX(1.150);font-size:18.5px">Max:</div>
<div class="t" style="left:1677.2px;top:455.8px;color:#5a5a5a;letter-spacing:0.00px;transform:scaleX(1.157);font-size:18.5px">0</div>
<div class="t" style="left:1726.5px;top:455.8px;color:#5a5a5a;letter-spacing:0.01px;transform:scaleX(1.150);font-size:18.5px">£ / order</div>
<div class="t" style="left:1496.2px;top:495.8px;color:#d0d0d0;letter-spacing:-0.02px;transform:scaleX(1.150);font-size:18.5px">Spread:</div>
<div class="t" style="left:1677.5px;top:495.3px;color:#d0d0d0;letter-spacing:0.00px;transform:scaleX(0.952);font-size:18.5px">1</div>
<div class="t" style="left:1722.5px;top:495.3px;color:#d0d0d0;letter-spacing:0.17px;transform:scaleX(1.150);font-size:18.5px">points</div>
<div class="t" style="left:1465.8px;top:545.2px;color:#d0d0d0;letter-spacing:1.02px;transform:scaleX(1.150);font-size:18.5px">Time period</div>
<div class="t" style="left:1508.8px;top:577.1px;color:#d0d0d0;letter-spacing:0.32px;transform:scaleX(1.150);font-size:18.5px">Start:Earliest date displayed</div>
<div class="t" style="left:1508.8px;top:604.0px;color:#d0d0d0;letter-spacing:-0.45px;transform:scaleX(1.150);font-size:18.5px">End:</div>
<div class="t" style="left:1566.4px;top:604.0px;color:#d0d0d0;letter-spacing:0.35px;transform:scaleX(1.150);font-size:18.5px">Real-time date</div>
<div class="t" style="left:1494.1px;top:657.7px;color:#d0d0d0;letter-spacing:0.38px;transform:scaleX(1.150);font-size:18.5px">ProBacktest in tick by tick mode</div>
<div class="t" style="left:1595.0px;top:1018.0px;color:#d0d0d0;letter-spacing:0.38px;transform:scaleX(1.150);font-size:18.5px">Keep window open</div>
<div class="t" style="left:1558.1px;top:1056.5px;color:#d0d0d0;letter-spacing:0.36px;transform:scaleX(1.150);font-size:18.5px">ProBacktest my system</div>
</body>
</html>
